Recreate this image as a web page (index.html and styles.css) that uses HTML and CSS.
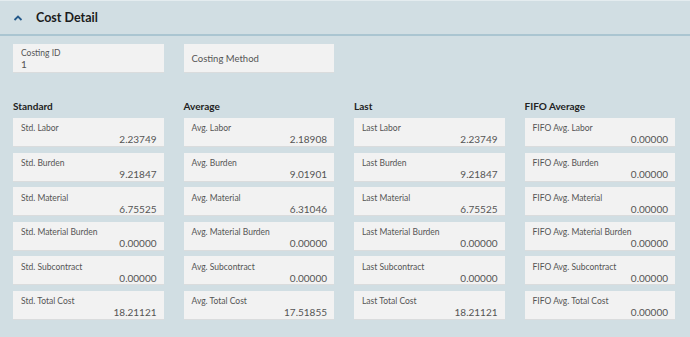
FILE: index.html
```html
<!DOCTYPE html>
<html lang="en">
<head>
    <meta charset="UTF-8">
    <meta name="viewport" content="width=device-width, initial-scale=1.0">
    <title>Cost Detail</title>
    <link rel="stylesheet" href="styles.css">
</head>
<body>
    <div class="panel">
        <div class="panel-header">
            <svg class="chevron" width="10" height="8" viewBox="0 0 10 8">
                <path d="M1.5 6 L5 2.5 L8.5 6" fill="none" stroke="#24598a" stroke-width="1.8"/>
            </svg>
            <h2>Cost Detail</h2>
        </div>

        <div class="panel-body">
            <div class="grid top-row">
                <div class="field">
                    <span class="label">Costing ID</span>
                    <span class="value left">1</span>
                </div>
                <div class="field single">
                    <span class="placeholder">Costing Method</span>
                </div>
            </div>

            <div class="grid columns">
                <div class="column">
                    <h3>Standard</h3>
                    <div class="field"><span class="label">Std. Labor</span><span class="value">2.23749</span></div>
                    <div class="field"><span class="label">Std. Burden</span><span class="value">9.21847</span></div>
                    <div class="field"><span class="label">Std. Material</span><span class="value">6.75525</span></div>
                    <div class="field"><span class="label">Std. Material Burden</span><span class="value">0.00000</span></div>
                    <div class="field"><span class="label">Std. Subcontract</span><span class="value">0.00000</span></div>
                    <div class="field"><span class="label">Std. Total Cost</span><span class="value">18.21121</span></div>
                </div>
                <div class="column">
                    <h3>Average</h3>
                    <div class="field"><span class="label">Avg. Labor</span><span class="value">2.18908</span></div>
                    <div class="field"><span class="label">Avg. Burden</span><span class="value">9.01901</span></div>
                    <div class="field"><span class="label">Avg. Material</span><span class="value">6.31046</span></div>
                    <div class="field"><span class="label">Avg. Material Burden</span><span class="value">0.00000</span></div>
                    <div class="field"><span class="label">Avg. Subcontract</span><span class="value">0.00000</span></div>
                    <div class="field"><span class="label">Avg. Total Cost</span><span class="value">17.51855</span></div>
                </div>
                <div class="column">
                    <h3>Last</h3>
                    <div class="field"><span class="label">Last Labor</span><span class="value">2.23749</span></div>
                    <div class="field"><span class="label">Last Burden</span><span class="value">9.21847</span></div>
                    <div class="field"><span class="label">Last Material</span><span class="value">6.75525</span></div>
                    <div class="field"><span class="label">Last Material Burden</span><span class="value">0.00000</span></div>
                    <div class="field"><span class="label">Last Subcontract</span><span class="value">0.00000</span></div>
                    <div class="field"><span class="label">Last Total Cost</span><span class="value">18.21121</span></div>
                </div>
                <div class="column">
                    <h3>FIFO Average</h3>
                    <div class="field"><span class="label">FIFO Avg. Labor</span><span class="value">0.00000</span></div>
                    <div class="field"><span class="label">FIFO Avg. Burden</span><span class="value">0.00000</span></div>
                    <div class="field"><span class="label">FIFO Avg. Material</span><span class="value">0.00000</span></div>
                    <div class="field"><span class="label">FIFO Avg. Material Burden</span><span class="value">0.00000</span></div>
                    <div class="field"><span class="label">FIFO Avg. Subcontract</span><span class="value">0.00000</span></div>
                    <div class="field"><span class="label">FIFO Avg. Total Cost</span><span class="value">0.00000</span></div>
                </div>
            </div>
        </div>
    </div>
</body>
</html>
```

FILE: styles.css
```css
body {
    margin: 0;
    background-color: #d1dee3;
    font-family: Lato, "Noto Sans", sans-serif;
    color: #333;
}
.panel-header {
    height: 33px;
    display: flex;
    align-items: center;
    padding-left: 13px;
    border-top: 1px solid #e4ecef;
    border-bottom: 2px solid #aac5d1;
}
.chevron {
    margin-right: 13px;
}
.panel-header h2 {
    margin: 0;
    font-size: 12.5px;
    font-weight: 700;
    color: #1b1b1b;
}
.panel-body {
    padding: 8px 15px 18px 13px;
}
.grid {
    display: grid;
    grid-template-columns: repeat(4, 1fr);
    column-gap: 20px;
}
.columns {
    margin-top: 20px;
}
.column h3 {
    margin: 0 0 5.4px;
    font-size: 10px;
    font-weight: 700;
    color: #222;
    line-height: 14px;
}
.field {
    height: 28px;
    box-sizing: border-box;
    background-color: #f2f2f2;
    box-shadow: 0 1px 0 #dadcdd;
    padding: 4.5px 7px 0 8px;
    margin-bottom: 6.6px;
    display: flex;
    flex-direction: column;
}
.label {
    font-size: 8.5px;
    color: #555;
    line-height: 12px;
}
.value {
    font-size: 10px;
    color: #555;
    text-align: right;
    line-height: 11px;
}
.value.left {
    text-align: left;
}
.top-row .field {
    padding-top: 3px;
}
.top-row .field.single {
    justify-content: center;
    padding-top: 0;
}
.placeholder {
    font-size: 9.5px;
    color: #555;
}
```
